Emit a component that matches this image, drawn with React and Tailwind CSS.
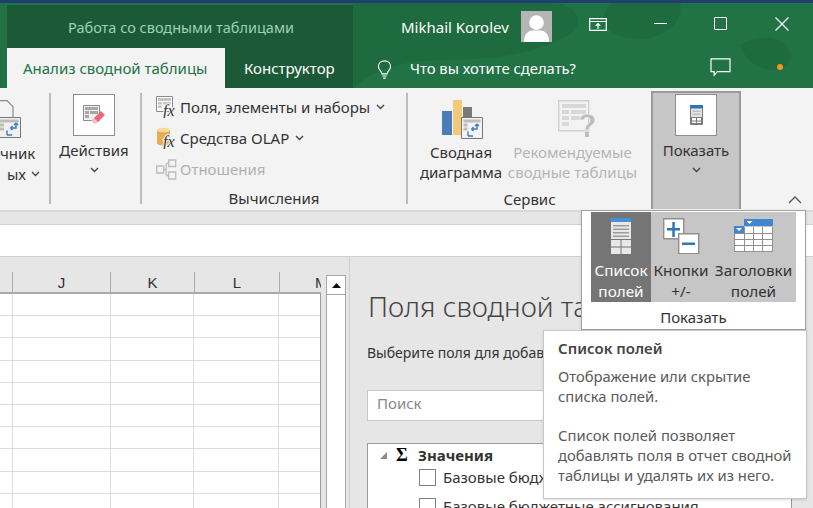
const font = { fontFamily: '"Noto Sans", "Open Sans", sans-serif' };

const Chevron = ({ className = '', stroke = '#444' }) => (
  <svg width="9" height="6" viewBox="0 0 9 6" className={className}>
    <path d="M1 1l3.5 3.5L8 1" fill="none" stroke={stroke} strokeWidth="1.4" />
  </svg>
);

const Sep = () => <div className="w-[2px] h-[111px] mt-[5px] bg-[#bcbcbc] shrink-0" />;

// icons
const ActionsIcon = () => (
  <svg width="22" height="20" viewBox="0 0 22 20">
    <path d="M.5.500h16v15H.5z" fill="#f0f0f0" stroke="#8c8c8c" />
    <path d="M2 2h13v3H2zM2 6h4v3H2zM2 10h4v3H2zM7 6h8v3H7z" fill="#a8a8a8" />
    <path d="M11 13l7-7 4 4-7 7h-4z" fill="#e9687e" />
    <path d="M8.500 15.500L11 13l4 4-1.500 1.500h-3z" fill="#f7c0c9" />
  </svg>
);

const FieldsIcon = () => (
  <svg width="21" height="22" viewBox="0 0 21 22">
    <path d="M.5.500h16v15H.5z" fill="#fff" stroke="#8c8c8c" />
    <path d="M2 2h13v3H2zM2 6h4v2.500H2zM2 9.500h4V12H2zM7 6h8v2.500H7z" fill="#c4c4c4" />
    <text x="7" y="20" fontFamily="Liberation Serif" fontStyle="italic" fontSize="16" stroke="#f3f3f3" strokeWidth="2" paintOrder="stroke" fill="#333">fx</text>
  </svg>
);

const OlapIcon = () => (
  <svg width="21" height="22" viewBox="0 0 21 22">
    <path d="M1 3v13c0 1.500 3 2.500 6.500 2.500S14 17.500 14 16V3z" fill="#e6ad52" />
    <ellipse cx="7.500" cy="3" rx="6.500" ry="2.300" fill="#f6dc9c" />
    <text x="7" y="20" fontFamily="Liberation Serif" fontStyle="italic" fontSize="16" stroke="#f3f3f3" strokeWidth="2" paintOrder="stroke" fill="#333">fx</text>
  </svg>
);

const RelationIcon = () => (
  <svg width="21" height="21" viewBox="0 0 21 21" fill="none" stroke="#bdbdbd" strokeWidth="1.300">
    <path d="M.7 7h7v7h-7zM12.700 1h7v6.500h-7zM12.700 13h7v7h-7zM7.700 10.500h2.500M10.200 4.500v12M10.200 4.500h2.500M10.200 16.500h2.500" />
  </svg>
);

const SwapArrows = ({ x = 0, y = 0 }) => (
  <path transform={`translate(${x} ${y})`} d="M9 0v5H3.500M3.500 5l2-2M3.500 5l2 2M0 12V7.500M0 12h5M9 0l-2 2M9 0l2 2" fill="none" stroke="#3a7cc4" strokeWidth="1.400" />
);

const PivotChartIcon = () => (
  <svg width="41" height="39" viewBox="0 0 41 39">
    <path d="M0 11h10v24H0z" fill="#4a7ebb" />
    <path d="M11 0h9v35h-9z" fill="#f2c879" />
    <path d="M21 7h9v10h-9z" fill="#7a7a7a" />
    <path d="M19.500 17.500h21v21h-21z" fill="#f3f3f3" stroke="#777" />
    <path d="M21.500 19.500h17v3h-17zM21.500 23.500h4v3h-4zM21.500 27.500h4v3h-4z" fill="#bdbdbd" />
    <SwapArrows x="26" y="24" />
  </svg>
);

const RecommendedIcon = () => (
  <svg width="38" height="39" viewBox="0 0 38 39">
    <path d="M.7.700h30v30H.7z" fill="#f3f3f3" stroke="#d0d0d0" strokeWidth="1.400" />
    <path d="M4 4h24v4H4zM4 10h7v4H4zM4 16h7v4H4zM4 22h7v4H4zM13 10h15v4H13zM13 16h10v4H13z" fill="#d8d8d8" />
    <path d="M22 20c0-4 3-6 7-6s8 2 8 6c0 5-6 5-6 10h-4c0-6 5-6 5-10 0-1.500-1.500-2.500-3-2.500s-3 1-3 2.500z" fill="#bdbdbd" stroke="#f3f3f3" strokeWidth=".8" />
    <path d="M27 32h4v5h-4z" fill="#bdbdbd" />
  </svg>
);

const DataSourceIcon = () => (
  <svg width="21" height="38" viewBox="0 0 21 38">
    <path d="M-2 .700h9l6 6v11H-2z" fill="#f3f3f3" stroke="#8c8c8c" strokeWidth="1.200" />
    <path d="M-2 17.500h22.500v20H-2z" fill="#f0f0f0" stroke="#777" />
    <path d="M0 19.500h18.500v3H0zM0 23.500h4v3H0zM0 27.500h4v3H0z" fill="#bdbdbd" />
    <SwapArrows x="7" y="23" />
  </svg>
);

const ShowSmallIcon = () => (
  <svg width="13" height="20" viewBox="0 0 13 20">
    <path d="M.5.500h12v19H.5z" fill="#e4e4e4" stroke="#7a7a7a" />
    <path d="M0 0h13v3.500H0z" fill="#2e75b6" />
    <path d="M2.500 5.500h8V7h-8zM2.500 8.500h8V10h-8z" fill="#c0c0c0" />
    <path d="M1 12h11v7H1z" fill="#7a7a7a" />
    <path d="M2 13h4v2.500H2zM7 13h4v2.500H7zM2 16.500h4V18H2zM7 16.500h4V18H7z" fill="#fff" />
  </svg>
);

const FieldListIcon = () => (
  <svg width="20" height="36" viewBox="0 0 20 36">
    <path d="M0 0h20v36H0z" fill="#e8e8e8" />
    <path d="M0 0h20v4H0z" fill="#4a8ed4" />
    <path d="M2 7h16v1.500H2zM2 10.500h16V12H2zM2 14h16v1.500H2zM2 17.500h16V19H2z" fill="#9c9c9c" />
    <path d="M0 21h20v1H0zM9.500 22h1v14h-1zM0 28.500h20v1H0z" fill="#757575" />
  </svg>
);

const PlusMinusIcon = () => (
  <svg width="37" height="36" viewBox="0 0 37 36">
    <path d="M.7.700h20v20H.7z" fill="#fff" stroke="#8f8f8f" strokeWidth="1.400" />
    <path d="M4 10h13v2.500H4zM9.300 4h2.500v15H9.300z" fill="#2e75b6" />
    <path d="M15.700 15.700h20v20h-20z" fill="#fff" stroke="#8f8f8f" strokeWidth="1.400" />
    <path d="M19 24.500h13V27H19z" fill="#2e75b6" />
  </svg>
);

const HeadersIcon = () => (
  <svg width="39" height="33" viewBox="0 0 39 33">
    <path d="M0 8h39v25H0z" fill="#8f8f8f" />
    <path d="M10 0h29v7H10z" fill="#3f86ce" />
    <path d="M0 7h10v7H0z" fill="#3f86ce" />
    <path d="M12.500 2h6l-3 3zM2 9h6l-3 3z" fill="#fff" />
    <path d="M11 8h8v6h-8zM20 8h8v6h-8zM29 8h9v6h-9zM1 15h9v5H1zM11 15h8v5h-8zM20 15h8v5h-8zM29 15h9v5h-9zM1 21h9v5H1zM11 21h8v5h-8zM20 21h8v5h-8zM29 21h9v5h-9zM1 27h9v5H1zM11 27h8v5h-8zM20 27h8v5h-8zM29 27h9v5h-9z" fill="#fff" />
  </svg>
);

const LargeBox = ({ children }) => (
  <div className="w-[42px] h-[42px] bg-white border border-[#8f8f8f] flex items-center justify-center">{children}</div>
);

const ROW_KEYS = Array.from({ length: 10 }, (_, i) => i);
const COLUMNS = [
  { key: 'I', label: '', cls: 'w-[13px] text-center' },
  { key: 'J', label: 'J', cls: 'w-[98px] text-center' },
  { key: 'K', label: 'K', cls: 'w-[84px] text-center' },
  { key: 'L', label: 'L', cls: 'w-[85px] text-center' },
  { key: 'M', label: 'M', cls: 'w-[41px] pl-[35px]' },
];

function TitleBar() {
  return (
    <div className="relative h-[88px] bg-[#217346] text-white overflow-hidden">
      <svg className="absolute inset-0" width="813" height="88" viewBox="0 0 813 88">
        <path d="M353 3h200c20 0 40 20 10 35-30 16-70 22-120 22-40 0-70 10-90 28z" fill="#1e6b40" />
        <path d="M610 3h70c5 20-20 40-50 35s-30-20-20-35zM740 45c25-15 55-5 50 15-3 15-40 15-50-15z" fill="#1e6b40" />
      </svg>
      <div className="relative h-[3px] bg-[#1f3f73]" />
      <div className="relative flex h-[45px]">
        <div className="w-[7px]" />
        <div className="w-[346px] mt-[2px] bg-[#1c5a37] pl-[61px] pt-[12px] text-[14.500px] leading-[20px] text-[#9fd0b4] whitespace-nowrap">Работа со сводными таблицами</div>
        <div className="w-[48px] shrink-0" />
        <div className="pt-[14px] text-[15px] leading-[20px] w-[109px] whitespace-nowrap">Mikhail Korolev</div>
        <div className="ml-[11px] mt-[8px] w-[31px] h-[31px] bg-[#b5b5b5] overflow-hidden">
          <svg width="31" height="31" viewBox="0 0 32 32">
            <circle cx="16" cy="12" r="7.500" fill="#fff" />
            <path d="M3 32c0-9 5-12 9-12h8c4 0 9 3 9 12z" fill="#fff" />
          </svg>
        </div>
        <div className="ml-[37px] mt-[15px]">
          <svg width="18" height="13" viewBox="0 0 18 13" fill="none" stroke="#fff" strokeWidth="1.200">
            <path d="M.7.700h16.600v11.600H.7zM.7 3.500h16.600M9 11V5.500M6.700 7.800L9 5.500l2.300 2.300" />
          </svg>
        </div>
        <div className="ml-[47px] mt-[20px] w-[13px] h-px bg-white" />
        <div className="ml-[47px] mt-[14px] w-[13px] h-[13px] border border-white rounded-[1px]" />
        <div className="ml-[48px] mt-[14px]">
          <svg width="14" height="14" viewBox="0 0 14 14" stroke="#fff" strokeWidth="1.200">
            <path d="M.5.500l13 13M13.500.500l-13 13" />
          </svg>
        </div>
      </div>
      <div className="relative flex h-[40px]">
        <div className="w-[7px]" />
        <div className="w-[218px] bg-[#f3f3f3] pl-[16px] pt-[10px] text-[15px] leading-[20px] text-[#217346] whitespace-nowrap">Анализ сводной таблицы</div>
        <div className="w-[128px] bg-[#1c5a37] pl-[19px] pt-[10px] text-[15px] leading-[20px]">Конструктор</div>
        <div className="ml-[24px] mt-[12px]">
          <svg width="15" height="19" viewBox="0 0 16 22" fill="none" stroke="#fff" strokeWidth="1.300">
            <path d="M5 16c0-3-4-4-4-8.500C1 3.500 4 1 8 1s7 2.500 7 6.500C15 12 11 13 11 16zM5.500 18.500h5M6.500 21h3" />
          </svg>
        </div>
        <div className="ml-[18px] pt-[10px] w-[168px] text-[14.800px] leading-[20px] whitespace-nowrap">Что вы хотите сделать?</div>
        <div className="ml-[132px] mt-[10px]">
          <svg width="21" height="19" viewBox="0 0 23 21" fill="none" stroke="#fff" strokeWidth="1.300">
            <path d="M1 1h21v14H8l-3.500 4v-4H1z" />
          </svg>
        </div>
        <div className="ml-[46px] mt-[16px] w-[6px] h-[6px] rounded-full bg-[#f5941e]" />
      </div>
    </div>
  );
}

function Ribbon() {
  return (
    <div className="relative flex h-[122px] bg-[#f3f3f3] text-[15px] leading-[20px] text-[#333]">
      {/* clipped "Источник данных" group */}
      <div className="w-[49px] shrink-0 overflow-hidden">
        <div className="h-[55px] pt-[12px]"><DataSourceIcon /></div>
        <div className="text-right pr-[14px] whitespace-nowrap">чник</div>
        <div className="flex items-center justify-end pr-[9px] gap-[5px] whitespace-nowrap mt-[1px]">ых<Chevron /></div>
      </div>
      <Sep />

      <div className="w-[89px] shrink-0 flex flex-col items-center pt-[6px] pr-[3px]">
        <LargeBox><ActionsIcon /></LargeBox>
        <div className="mt-[4px]">Действия</div>
        <Chevron className="mt-[7px]" />
      </div>
      <Sep />

      <div className="w-[264px] shrink-0 flex flex-col pl-[14px] pt-[8px]">
        <div className="flex items-center gap-[3px] h-[22px]"><FieldsIcon />Поля, элементы и наборы<Chevron className="ml-[3px]" /></div>
        <div className="flex items-center gap-[3px] h-[22px] mt-[9px]"><OlapIcon />Средства OLAP<Chevron className="ml-[3px]" /></div>
        <div className="flex items-center gap-[3px] h-[22px] mt-[9px] text-[#b0b0b0]"><RelationIcon />Отношения</div>
        <div className="mt-[8px] -ml-[14px] text-center">Вычисления</div>
      </div>
      <Sep />

      <div className="w-[243px] shrink-0 flex flex-col">
        <div className="flex h-[101px] pl-[6px]">
          <div className="w-[94px] flex flex-col items-center pt-[12px] text-center">
            <div className="ml-[3px]"><PivotChartIcon /></div>
            <div className="mt-[3px] whitespace-nowrap">Сводная<br />диаграмма</div>
          </div>
          <div className="w-[129px] flex flex-col items-center pt-[12px] text-center text-[#b5b5b5]">
            <div className="ml-[8px]"><RecommendedIcon /></div>
            <div className="mt-[3px] whitespace-nowrap">Рекомендуемые<br />сводные таблицы</div>
          </div>
        </div>
        <div className="text-center">Сервис</div>
      </div>

      <div className="w-[90px] h-[118px] mt-[3px] shrink-0 bg-[#c6c6c6] border-x-2 border-t-2 border-[#9a9a9a] flex flex-col items-center pt-[1px]">
        <LargeBox><ShowSmallIcon /></LargeBox>
        <div className="mt-[4px]">Показать</div>
        <Chevron className="mt-[7px]" />
      </div>

      <svg className="absolute left-[788px] top-[108px]" width="14" height="8" viewBox="0 0 14 8">
        <path d="M1 7l6-6 6 6" fill="none" stroke="#555" strokeWidth="1.300" />
      </svg>
    </div>
  );
}

function FieldsPane() {
  return (
    <div className="flex-1 pl-[18px] pt-[31px] overflow-hidden whitespace-nowrap text-[#333]">
      <div className="text-[28px] leading-[36px] font-light text-[#444]">Поля сводной таблицы</div>
      <div className="mt-[20px] text-[14px] leading-[18px] -ml-px">Выберите поля для добавления в отчет:</div>
      <div className="mt-[28px] -ml-px w-[428px] h-[31px] bg-white border border-[#c8c8c8] pl-[9px] text-[15px] leading-[25px] text-[#8a8a8a]">Поиск</div>
      <div className="mt-[22px] -ml-px w-[425px] h-[100px] bg-white border border-[#9a9a9a] pl-[11px] pt-[1px]">
        <div className="flex items-center h-[20px]">
          <svg width="9" height="9" viewBox="0 0 9 9"><path d="M8 1v7H1z" fill="#8c8c8c" /></svg>
          <span className="ml-[8px] w-[16px] text-[18px] font-bold font-serif text-black">Σ</span>
          <span className="ml-[6px] text-[15px] font-bold">Значения</span>
        </div>
        <div className="flex items-center h-[24px] ml-[40px]">
          <div className="w-[17px] h-[17px] border border-[#808080] bg-white" />
          <span className="ml-[7px] text-[15px]">Базовые бюджетные ассигнования</span>
        </div>
        <div className="flex items-center h-[24px] ml-[40px] mt-[5px]">
          <div className="w-[17px] h-[17px] border border-[#808080] bg-white" />
          <span className="ml-[7px] text-[15px]">Базовые бюджетные ассигнования</span>
        </div>
      </div>
    </div>
  );
}

function Sheet() {
  return (
    <div className="flex h-[251px] bg-[#e6e6e6] overflow-hidden">
      <div className="w-[326px] shrink-0 pt-[15px]">
        <div className="flex h-[22px] w-[321px]">
          {COLUMNS.map((c) => (
            <div key={c.key} className={`${c.cls} h-[22px] border-r border-b-2 last:border-r-0 border-[#ababab] text-[15px] leading-[22px] font-['Liberation_Sans',sans-serif] text-[#333] overflow-hidden`}>{c.label}</div>
          ))}
        </div>
        <div className="w-[321px] bg-white border-r border-[#9a9a9a]">
          {ROW_KEYS.map((r) => (
            <div key={r} className="flex h-[22.200px] border-b border-[#dcdcdc]">
              {COLUMNS.map((c) => (
                <div key={c.key} className={`${c.cls} pl-0 border-r last:border-r-0 border-[#dcdcdc]`} />
              ))}
            </div>
          ))}
        </div>
      </div>
      <div className="w-[20px] shrink-0 mt-[18px] bg-white border-x border-[#a8a8a8]">
        <div className="h-[20px] border-y border-[#a8a8a8] flex items-center justify-center">
          <svg width="9" height="5" viewBox="0 0 9 5"><path d="M4.500 0L9 5H0z" fill="#111" /></svg>
        </div>
      </div>
      <div className="w-[4px] shrink-0 border-r border-[#cfcfcf]" />
      <FieldsPane />
    </div>
  );
}

function ShowPopup() {
  return (
    <div className="absolute left-[581px] top-[210px] w-[225px] h-[120px] bg-white border border-[#a0a0a0] shadow-sm flex flex-col items-center text-[15.300px] leading-[21px] text-[#333]">
      <div className="mt-[1px] w-[205px] h-[90px] bg-[#c6c6c6] flex">
        <div className="w-[60px] bg-[#757575] text-white flex flex-col items-center pt-[6px] text-center whitespace-nowrap">
          <FieldListIcon />
          <div className="mt-[6px]">Список<br />полей</div>
        </div>
        <div className="w-[60px] flex flex-col items-center pt-[6px] text-center whitespace-nowrap">
          <PlusMinusIcon />
          <div className="mt-[6px]">Кнопки<br />+/-</div>
        </div>
        <div className="w-[85px] flex flex-col items-center pt-[7px] text-center whitespace-nowrap">
          <HeadersIcon />
          <div className="mt-[8px]">Заголовки<br />полей</div>
        </div>
      </div>
      <div className="mt-[5px] text-[15px]">Показать</div>
    </div>
  );
}

function FieldTip() {
  return (
    <div className="absolute left-[543px] top-[330px] w-[264px] h-[169px] bg-white border border-[#c8c8c8] shadow-sm pl-[14px] pt-[7px] text-[14.800px] leading-[20px] text-[#5a5a5a] whitespace-nowrap">
      <div className="font-semibold text-[15px] text-[#444]">Список полей</div>
      <div className="mt-[8px]">Отображение или скрытие<br />списка полей.</div>
      <div className="mt-[19px]">Список полей позволяет<br />добавлять поля в отчет сводной<br />таблицы и удалять их из него.</div>
    </div>
  );
}

export default function App() {
  return (
    <div className="relative w-[813px] h-[508px] overflow-hidden bg-[#e6e6e6]" style={font}>
      <TitleBar />
      <Ribbon />
      <div className="h-[2px] bg-[#d8d8d8]" />
      <div className="h-[12px] bg-[#e6e6e6]" />
      <div className="h-[33px] bg-white border-y border-[#cfcfcf]" />
      <Sheet />
      <ShowPopup />
      <FieldTip />
    </div>
  );
}
